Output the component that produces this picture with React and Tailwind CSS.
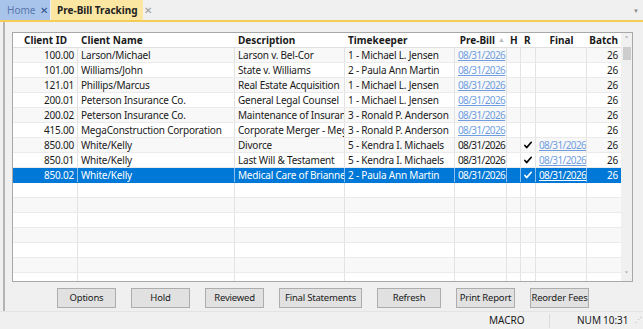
import React from 'react';

const rows = [
  { id: '100.00', name: 'Larson/Michael', desc: 'Larson v. Bel-Cor', tk: '1 - Michael L. Jensen', pre: '08/31/2026', preLink: true, r: false, final: '', batch: '26' },
  { id: '101.00', name: 'Williams/John', desc: 'State v. Williams', tk: '2 - Paula Ann Martin', pre: '08/31/2026', preLink: true, r: false, final: '', batch: '26' },
  { id: '121.01', name: 'Phillips/Marcus', desc: 'Real Estate Acquisition', tk: '1 - Michael L. Jensen', pre: '08/31/2026', preLink: true, r: false, final: '', batch: '26' },
  { id: '200.01', name: 'Peterson Insurance Co.', desc: 'General Legal Counsel', tk: '1 - Michael L. Jensen', pre: '08/31/2026', preLink: true, r: false, final: '', batch: '26' },
  { id: '200.02', name: 'Peterson Insurance Co.', desc: 'Maintenance of Insurance', tk: '3 - Ronald P. Anderson', pre: '08/31/2026', preLink: true, r: false, final: '', batch: '26' },
  { id: '415.00', name: 'MegaConstruction Corporation', desc: 'Corporate Merger - Mega', tk: '3 - Ronald P. Anderson', pre: '08/31/2026', preLink: true, r: false, final: '', batch: '26' },
  { id: '850.00', name: 'White/Kelly', desc: 'Divorce', tk: '5 - Kendra I. Michaels', pre: '08/31/2026', preLink: false, r: true, final: '08/31/2026', batch: '26' },
  { id: '850.01', name: 'White/Kelly', desc: 'Last Will & Testament', tk: '5 - Kendra I. Michaels', pre: '08/31/2026', preLink: false, r: true, final: '08/31/2026', batch: '26' },
  { id: '850.02', name: 'White/Kelly', desc: 'Medical Care of Brianne', tk: '2 - Paula Ann Martin', pre: '08/31/2026', preLink: false, r: true, final: '08/31/2026', batch: '26', selected: true },
];

const cols = 'grid grid-cols-[65px_157px_110px_110px_52px_14px_15px_51px_34px]';

function Check() {
  return (
    <svg width="11" height="10" viewBox="0 0 11 10" className="block">
      <path d="M1.2 5.6 L3.6 8.6 L10 1.2" fill="none" stroke="currentColor" strokeWidth="2.2" strokeLinecap="round" strokeLinejoin="round" />
    </svg>
  );
}

function Row({ row, index }) {
  const sel = row && row.selected;
  const bg = sel ? 'bg-[#0078d7] text-white' : index % 2 === 0 ? 'bg-[#f8f8f8] text-[#1a1a1a]' : 'bg-white text-[#1a1a1a]';
  const cell = `h-[14px] leading-[14px] px-[3px] whitespace-nowrap overflow-hidden border-r ${sel ? 'border-[#8cc0ec]' : 'border-[#e3e3e3]'}`;
  const link = sel ? 'underline' : 'underline text-[#6f9de0]';
  return (
    <div className={`${cols} ${bg} border-b tracking-[-0.2px] ${sel ? 'border-[#0078d7]' : 'border-[#ebebeb]'}`}>
      <div className={`${cell} text-right`}>{row?.id}</div>
      <div className={cell}>{row?.name}</div>
      <div className={cell}>{row?.desc}</div>
      <div className={cell}>{row?.tk}</div>
      <div className={`${cell} px-[2px] tracking-[-0.6px]`}>{row && <span className={row.preLink ? link : ''}>{row.pre}</span>}</div>
      <div className={cell}></div>
      <div className={`${cell} px-0 flex items-center justify-center ${sel ? 'text-white' : 'text-black'}`}>{row?.r ? <Check /> : null}</div>
      <div className={`${cell} px-[2px] tracking-[-0.6px]`}>{row?.final && <span className={link}>{row.final}</span>}</div>
      <div className={`${cell} text-right border-r-0`}>{row?.batch}</div>
    </div>
  );
}

export default function App() {
  const empty = Array.from({ length: 8 });
  const buttons = [
    ['Options', 'w-[59px]'],
    ['Hold', 'w-[59px]'],
    ['Reviewed', 'w-[59px]'],
    ['Final Statements', 'w-[83px]'],
    ['Refresh', 'w-[64px]'],
    ['Print Report', 'w-[59px]'],
    ['Reorder Fees', 'w-[59px]'],
  ];
  return (
    <div className="w-[643px] h-[329px] bg-[#f0f0f0] flex flex-col overflow-hidden text-[10px]" style={{ fontFamily: '"Noto Sans", "Open Sans", sans-serif' }}>
      {/* tabs */}
      <div className="h-[20px] flex items-end relative whitespace-nowrap">
        <div className="h-[20px] w-[50px] bg-[#a9c4ea] flex items-center pl-[7px] gap-[5px] text-[#5a78ae]">
          <span>Home</span>
          <span className="text-[#2c4f8c] text-[10px]">✕</span>
        </div>
        <div className="h-[20px] ml-[1px] w-[92px] bg-[#fbe7a1] flex items-center pl-[6px] gap-[6px]">
          <span className="font-bold text-[#222]">Pre-Bill Tracking</span>
          <span className="text-[#999] text-[10px]">✕</span>
        </div>
        <span className="absolute right-[4px] top-[7px] text-[6px] text-[#888]">▼</span>
      </div>
      <div className="h-[2px] bg-[#f3cd58]" />
      {/* panel */}
      <div className="flex-1 ml-[3px] mr-[5px] border-l-2 border-[#b4b4b4] flex flex-col pt-[10px] pl-[7px]">
        <div className="w-[621px] h-[250px] border border-[#a8a8a8] bg-white flex overflow-hidden">
          <div className="w-[608px] flex flex-col overflow-hidden">
            <div className={`${cols} h-[14px] leading-[14px] font-bold text-[#1a1a1a] bg-white border-b border-[#e0e0e0] shrink-0 box-content`}>
              <div className="text-center">Client ID</div>
              <div className="pl-[3px]">Client Name</div>
              <div className="pl-[3px]">Description</div>
              <div className="pl-[3px]">Timekeeper</div>
              <div className="flex justify-end items-center pr-[2px] gap-[3px]">Pre-Bill<span className="text-[#bbb] font-normal text-[7px]">▲</span></div>
              <div className="pl-[3px]">H</div>
              <div className="pl-[3px]">R</div>
              <div className="text-center">Final</div>
              <div className="text-right pr-[3px]">Batch</div>
            </div>
            {rows.map((r, i) => <Row key={i} row={r} index={i} />)}
            {empty.map((_, i) => <Row key={'e' + i} index={i + rows.length} />)}
          </div>
          <div className="w-[11px] flex flex-col items-center bg-[#f0f0f0]">
            <span className="h-[14px] text-[9px] leading-[14px] text-[#555]">˄</span>
            <div className="w-[8px] h-[13px] bg-[#cdcdcd]" />
            <div className="flex-1" />
            <span className="h-[12px] text-[9px] leading-[12px] text-[#555]">˅</span>
          </div>
        </div>
        <div className="flex ml-[45px] mt-[6px] gap-[15px]">
          {buttons.map(([b, w]) => (
            <div key={b} className={`${w} h-[20px] border border-[#adadad] bg-[#e1e1e1] flex items-center justify-center text-[#1a1a1a] text-[9.5px] whitespace-nowrap tracking-[-0.2px]`}>{b}</div>
          ))}
        </div>
      </div>
      {/* status bar */}
      <div className="h-[18px] shrink-0 flex items-center text-[#1a1a1a] border-t border-[#e4e4e4] whitespace-nowrap">
        <div className="w-[489px]" />
        <div className="w-[60px]">MACRO</div>
        <div className="w-[28px] border-l border-[#dadada] h-[14px]" />
        <div className="w-[26px]">NUM</div>
        <div className="w-[32px]">10:31</div>
        <div className="text-[7px] text-[#aaa]">⋰</div>
      </div>
    </div>
  );
}
